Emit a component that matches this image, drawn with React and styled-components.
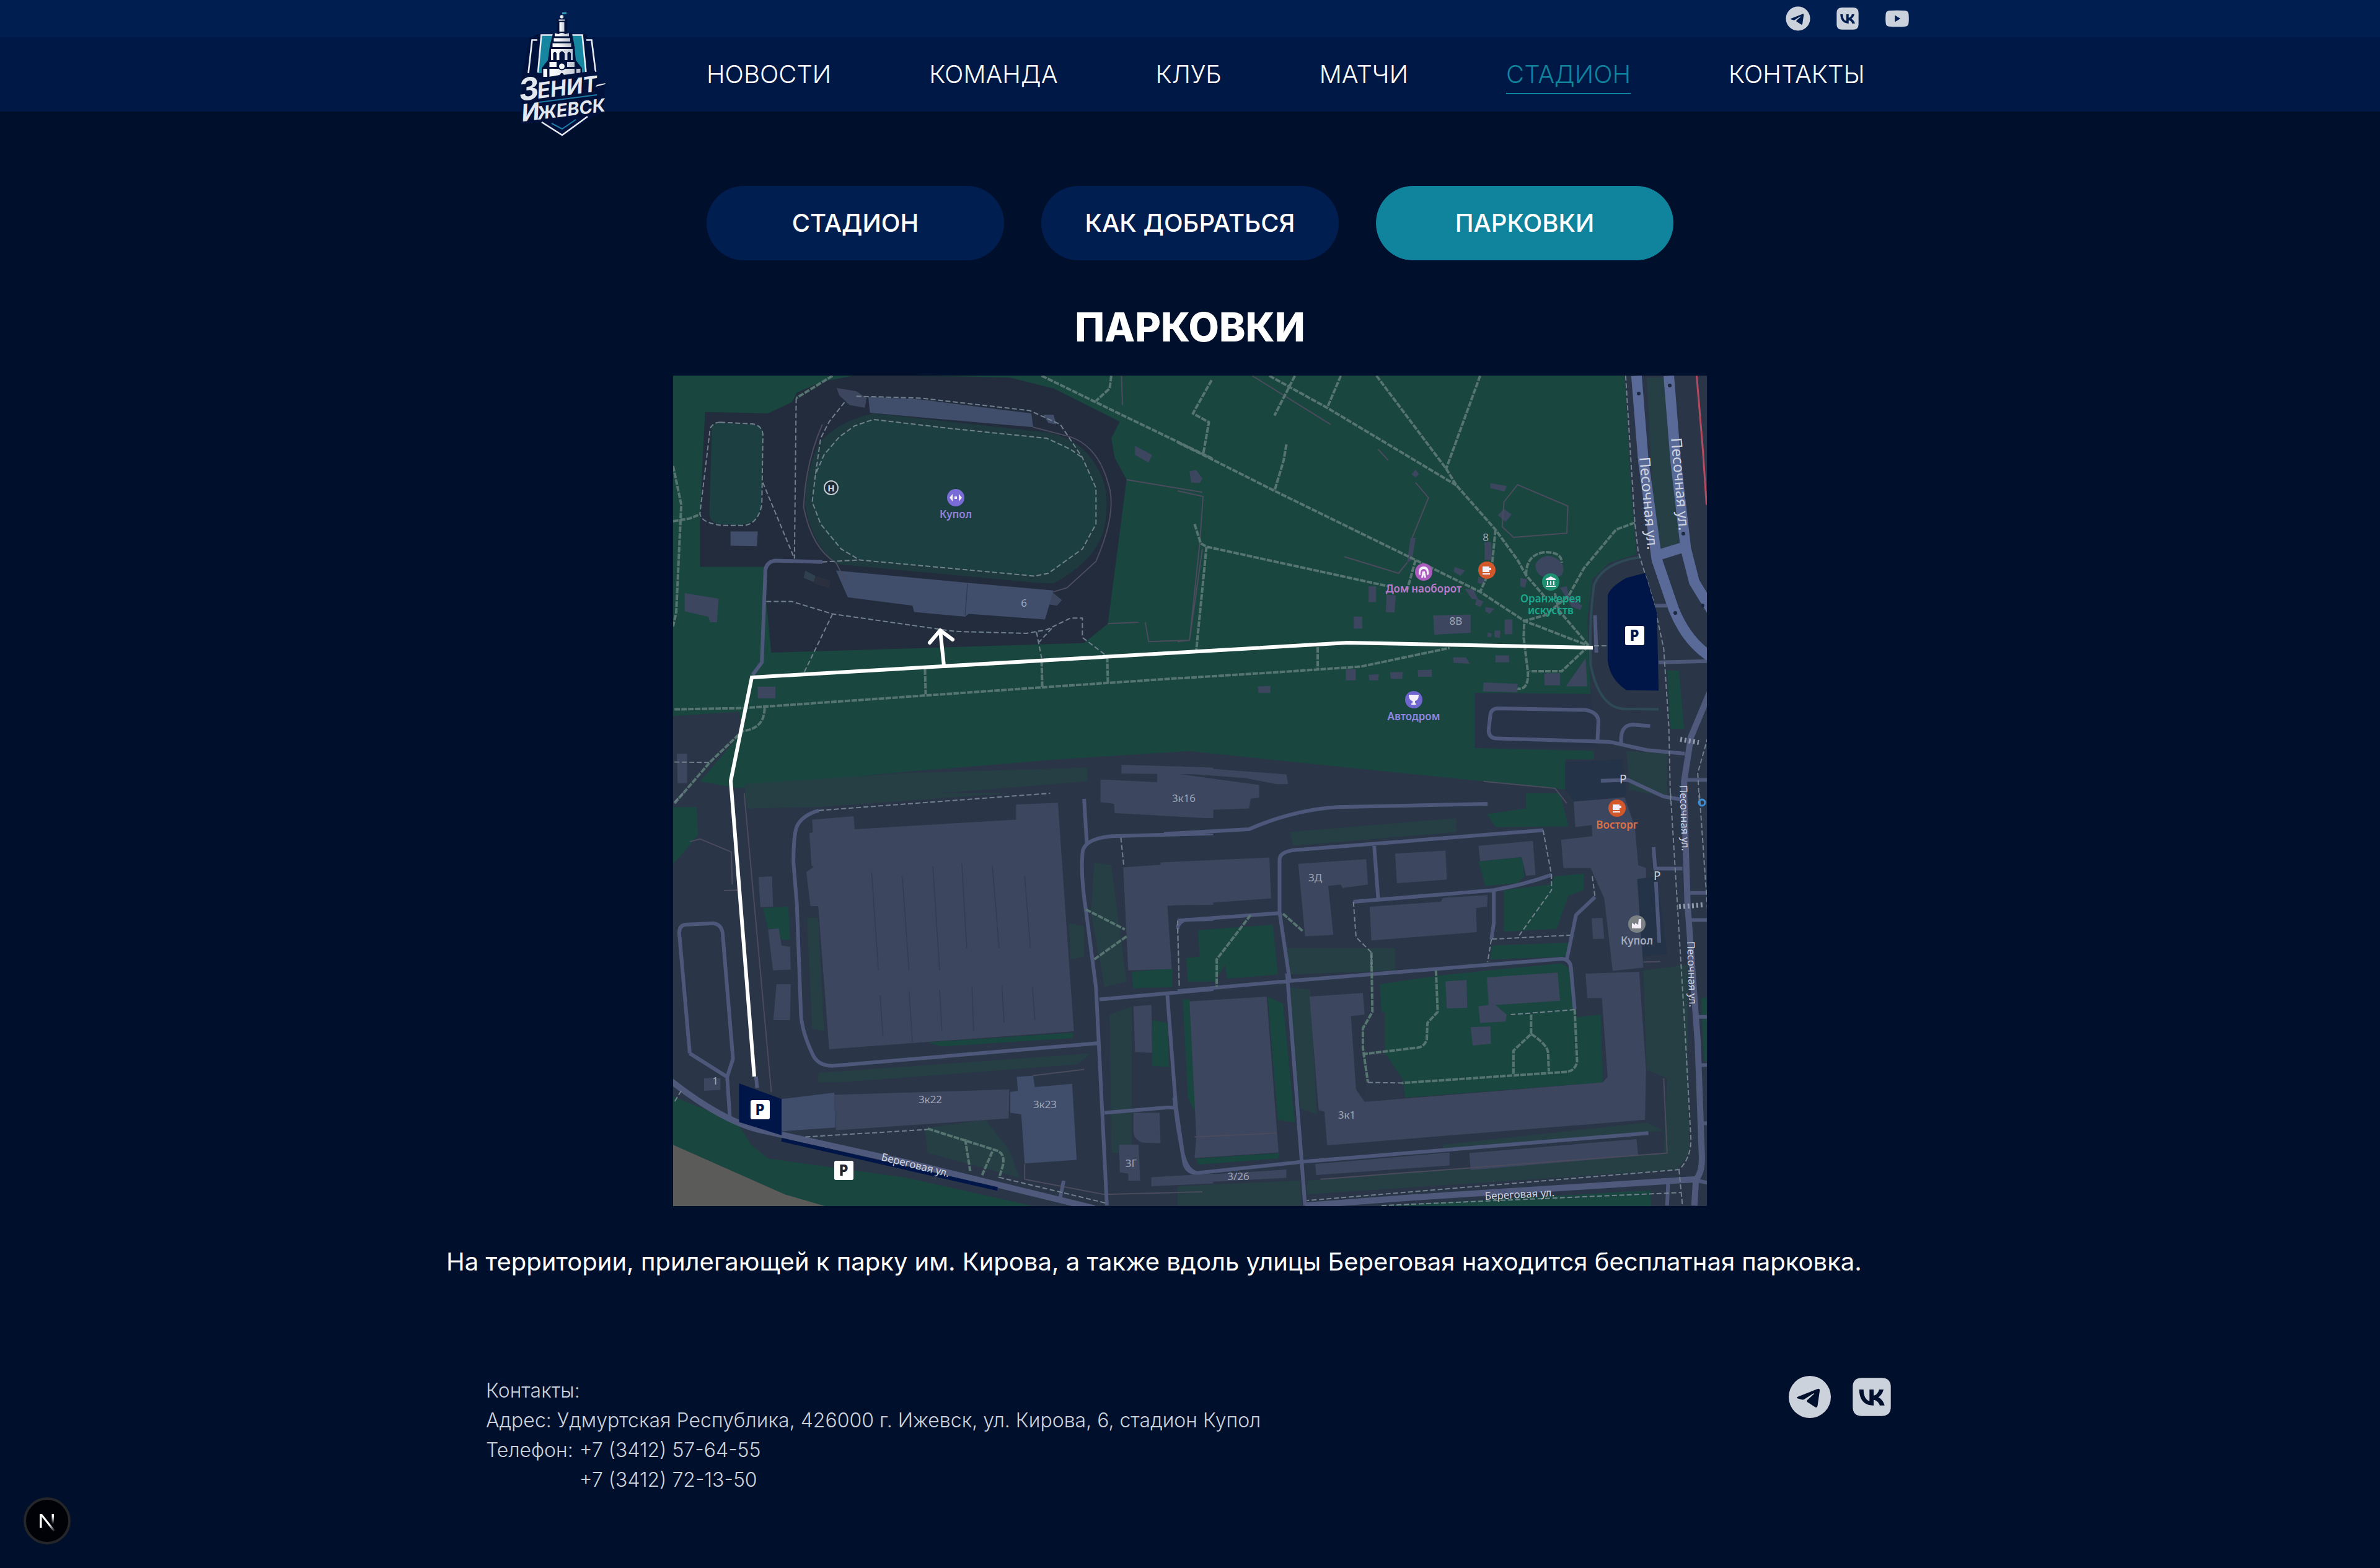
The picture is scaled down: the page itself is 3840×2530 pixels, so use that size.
import React from "react";
import styled, { createGlobalStyle } from "styled-components";

const color = {
  page: "#000f2b",
  topBar: "#001e50",
  navBar: "#001845",
  accent: "#10839d",
  text: "#ffffff",
  muted: "#ccd2dc",
};

const GlobalStyle = createGlobalStyle`
  * { box-sizing: border-box; }
  body {
    margin: 0;
    background: ${color.page};
    color: ${color.text};
    font-family: Inter, "Noto Sans", sans-serif;
  }
  a { color: inherit; text-decoration: none; }
  h1, p, address { margin: 0; font-style: normal; }
`;

const Page = styled.div`
  min-height: 100vh;
  display: flex;
  flex-direction: column;
`;

const Container = styled.div`
  width: 100%;
  max-width: 2400px;
  margin: 0 auto;
`;

const Header = styled.header`
  position: relative;
`;

const TopBar = styled.div`
  background: ${color.topBar};
`;

const TopBarInner = styled(Container)`
  height: 60px;
  padding-right: 36px;
  display: flex;
  justify-content: flex-end;
  align-items: center;
`;

const SocialList = styled.div`
  display: flex;
  align-items: center;
  gap: ${(p) => p.$gap}px;
`;

const SocialLink = styled.a`
  display: block;
  width: ${(p) => p.$size}px;
  height: ${(p) => p.$size}px;
  color: ${color.muted};
  svg { display: block; width: 100%; height: 100%; }
`;

const NavBar = styled.div`
  background: ${color.navBar};
`;

const NavInner = styled(Container)`
  position: relative;
  height: 120px;
  padding-left: 420px;
  display: flex;
  align-items: center;
`;

const LogoLink = styled.a`
  position: absolute;
  left: 110px;
  top: -50px;
  svg { display: block; width: 160px; height: 220px; }
`;

const Nav = styled.nav`
  display: flex;
  gap: 158px;
`;

const NavLink = styled.a`
  font-size: 40px;
  line-height: 60px;
  font-weight: 300;
  color: ${(p) => (p.$active ? color.accent : color.text)};
  border-top: 2px solid transparent;
  border-bottom: 2px solid ${(p) => (p.$active ? color.accent : "transparent")};
`;

const Main = styled(Container).attrs({ as: "main" })`
  padding: 120px 0 90px;
  display: flex;
  flex-direction: column;
  align-items: center;
`;

const Tabs = styled.div`
  display: flex;
  gap: 60px;
`;

const Tab = styled.button`
  width: 480px;
  height: 120px;
  border: 0;
  border-radius: 60px;
  background: ${(p) => (p.$active ? color.accent : "#001e50")};
  color: ${color.text};
  font: 500 40px/60px Inter, "Noto Sans", sans-serif;
  cursor: pointer;
`;

const Title = styled.h1`
  margin: 66px 0 36px;
  font-size: 64px;
  line-height: 84px;
  font-weight: 800;
`;

const MapSvg = styled.svg`
  display: block;
  width: 100%;
  max-width: 1668px;
  height: auto;
  font-family: "Noto Sans", sans-serif;
`;

const Description = styled.p`
  align-self: stretch;
  margin-top: 60px;
  font-size: 40px;
  line-height: 60px;
`;

const Footer = styled(Container).attrs({ as: "footer" })`
  padding: 64px 60px 118px 64px;
  display: flex;
  justify-content: space-between;
  align-items: flex-start;
`;

const Contacts = styled.address`
  font-size: 32px;
  line-height: 48px;
  font-weight: 300;
  color: ${color.muted};
`;

const Phones = styled.div`
  display: flex;
  gap: 10px;
`;

const PhoneList = styled.div`
  display: flex;
  flex-direction: column;
`;

const FooterSocials = styled.div`
  margin-top: -6px;
`;

const DevBadge = styled.button`
  position: fixed;
  left: 38px;
  bottom: 38px;
  width: 76px;
  height: 76px;
  padding: 0;
  border: 4px solid #24262a;
  border-radius: 50%;
  background: #000208;
  svg { display: block; width: 68px; height: 68px; }
`;

/* ---------- icons ---------- */

const TelegramIcon = () => (
  <svg viewBox="0 0 80 80" fill="currentColor" fillRule="evenodd" aria-hidden="true">
    <path d="M40 6A34 34 0 1 1 40 74A34 34 0 1 1 40 6ZM20 40L52 27.2Q56.5 25.5 56 30L52.5 54.5Q51.5 58.5 48 56L36.5 48.5Q34 47 36 45L46.5 35.5Q48 33.5 45.5 34.5L31.5 43.5Q29.5 45 26 44L20 42.2Q18 41 20 40Z" />
  </svg>
);

const VkIcon = () => (
  <svg viewBox="0 0 80 80" fill="currentColor" fillRule="evenodd" aria-hidden="true">
    <path d="M24 9.3H56Q70.7 9.3 70.7 24V56Q70.7 70.7 56 70.7H24Q9.3 70.7 9.3 56V24Q9.3 9.3 24 9.3ZM19.7 28H26.7C26.8 38 30 45 36.3 46.5V28H43V37.8C47 37.2 50.5 33.5 52 28H59C57.5 34 54 38.5 50.5 40.5C55 42.5 59 47.5 60.7 53.7H53C51.5 49 48 45.3 43 44.7V53.7H42.2C28 53.7 20 44.5 19.7 28Z" />
  </svg>
);

const YoutubeIcon = () => (
  <svg viewBox="0 0 80 80" fill="currentColor" fillRule="evenodd" aria-hidden="true">
    <path d="M17 18Q40 16 63 18Q71 18.5 72 27Q73.500 40 72 53Q71 61.500 63 62Q40 64 17 62Q9 61.500 8 53Q6.500 40 8 27Q9 18.500 17 18ZM33.500 30.500V49.500L49 40Z" />
  </svg>
);

const NextMark = () => (
  <svg viewBox="0 0 68 68" aria-hidden="true">
    <defs>
      <linearGradient id="stem" x1="0" y1="0" x2="0" y2="1">
        <stop offset="0.2" stopColor="#fff" />
        <stop offset="1" stopColor="#fff" stopOpacity="0" />
      </linearGradient>
      <linearGradient id="diag" x1="0" y1="0" x2="1" y2="1">
        <stop offset="0.6" stopColor="#fff" />
        <stop offset="1" stopColor="#fff" stopOpacity="0" />
      </linearGradient>
    </defs>
    <path d="M22 23H25.500V45H22Z" fill="#fff" />
    <path d="M22 23H26L47 49.500L44 51Z" fill="url(#diag)" />
    <path d="M41.500 23H45V39H41.500Z" fill="url(#stem)" />
  </svg>
);

const Logo = () => (
  <svg viewBox="0 0 160 220" role="img" aria-label="Зенит-Ижевск">
    <defs>
      <linearGradient id="stone" x1="0" y1="0" x2="1" y2="0">
        <stop offset="0.3" stopColor="#f7f8fb" />
        <stop offset="1" stopColor="#b9bfcc" />
      </linearGradient>
    </defs>
    <path d="M37 45H116L133 110L146 145L143 170L120 182L77 211L42 188L11 188L12 112L24 52Z" fill="#00123c" />
    <g fill="none" stroke="#e8ebf1" strokeWidth="2.600">
      <path d="M37 54.500H28.500L22.500 108" />
      <path d="M116 54.500H124.500L131 106" />
    </g>
    <path d="M44 47H109L115 108H38Z" fill="#1686a0" />
    <path d="M62 46.500H43.500L38 107" fill="none" stroke="#e8ebf1" strokeWidth="2.600" />
    <path d="M91 46.500H109.500L115.500 107" fill="none" stroke="#e8ebf1" strokeWidth="2.600" />
    <path d="M68 20H85V42L93 44L97 65L99 87L109 100V116H44V100L54 87L57 65L62 44L69 42Z" fill="#00123c" />
    <path d="M77 10H84V13H77Z" fill="#2a9cc0" />
    <g fill="url(#stone)">
      <circle cx="76.500" cy="17" r="2.800" />
      <path d="M71.500 21.500H81.500V23.500H71.500ZM72.500 25.500H80.500V41H72.500Z" />
      <path d="M65 43.500L71 45Q76.500 41 82 45L88 43.500V48.500H65Z" />
      <path d="M63.500 51.500H90V57H63.500ZM61.500 60H91.500V66H61.500Z" />
      <path d="M59 69H94V87H91V76Q88 71 85.500 76V87H81V76Q76.500 69 72.500 76V87H68V76Q65.500 71 62.500 76V87H59Z" />
      <path d="M56.500 90H68V98H56.500ZM85 90H97V98H85Z" />
      <path d="M46.500 101H53V114H46.500ZM56.500 101H97V111H80Q76.500 104 73 111L56.500 114ZM100 101H106.500V109H100Z" />
    </g>
    <circle cx="76.500" cy="97" r="6.500" fill="#00123c" />
    <circle cx="76.500" cy="97" r="4.500" fill="#f7f8fb" />
    <path d="M12 120L130 104L136 126L148 122L140 170L14 190Z" fill="#00123c" />
    <g fill="#e3e7ee" fontFamily="Inter, sans-serif" fontWeight="700" fontStyle="italic">
      <text transform="translate(9 153) rotate(-7)" fontSize="50">З</text>
      <text transform="translate(38 149) rotate(-7)" fontSize="35">ЕНИТ</text>
      <text transform="translate(13 186) rotate(-7)" fontSize="38">И</text>
      <text transform="translate(38 183) rotate(-7)" fontSize="29">ЖЕВСК</text>
    </g>
    <path d="M133 127L147 124L146 126L131 130Z" fill="#e3e7ee" />
    <path d="M40 155L133 143" stroke="#1d7ba5" strokeWidth="2" />
    <path d="M44 187L77 208L118 178" fill="none" stroke="#e8ebf1" strokeWidth="2.600" />
    <path d="M60 189L77 198L99 183" fill="none" stroke="#1d7ba5" strokeWidth="2" />
  </svg>
);

/* ---------- parking map ---------- */

// The plan is stored as four survey sheets, each with its own grid; `plot`
// converts a sheet's path data into map units.
const SHEETS = {
  nw: { x: -6, y: -6 },
  ne: { x: 814, y: -6 },
  sw: { x: -6, y: 674 },
  se: { x: 814, y: 674 },
};
const GRID_X = 860 / 1568;
const GRID_Y = 700 / 1568;

const plot = (sheet, d) =>
  d.replace(/(-?\d+) (-?\d+)/g, (_, x, y) =>
    `${(x * GRID_X + SHEETS[sheet].x).toFixed(1)} ${(y * GRID_Y + SHEETS[sheet].y).toFixed(1)}`
  );

const AREAS = [
  // park
  { fill: "#1a4640", nw: "M0 0L1600 0L1600 1365L1150 1400L700 1445L200 1505L90 1480L160 1380L215 1300L205 1228L0 1245Z", ne: "M-10 0L1315 0L1335 450L1350 660L1270 690L1220 750L1205 900L1215 1165L875 1160L875 1360L1225 1370L1225 1400L1140 1400L1140 1510L900 1480L500 1430L-10 1365Z" },
  // stadium grounds
  { fill: "#222c3c", nw: "M105 145L290 150L360 110L375 75L450 35L560 10L1000 20L1130 60L1325 180L1300 240L1310 310L1345 390L1290 910L1220 980L300 1015L285 830L280 705L90 705L90 520Z" },
  { fill: "#1f3a3e", nw: "M600 150L1120 220Q1220 250 1260 350Q1300 430 1280 560Q1260 680 1130 765L1080 762L490 695Q420 620 400 490Q395 380 440 260Q490 180 600 150Z" },
  { fill: "#1c4042", nw: "M600 172L1110 240Q1190 260 1230 350Q1275 430 1255 550Q1220 660 1115 728L1075 738L560 680Q450 620 420 470Q420 330 470 270Q530 190 600 172ZM125 200Q130 185 150 185L240 190Q278 195 275 230L270 490Q260 550 210 553L140 550Q115 540 118 500Z" },
  // muted lawns
  { fill: "#263f45", nw: "M220 1490L700 1450L1230 1430L1230 1480L230 1580Z", sw: "M220 0L1000 0L440 50L230 55ZM405 450L438 450L455 860L420 850ZM440 1010L1240 940L1200 980L500 1045L435 1045ZM1250 250L1300 260L1345 680L1280 700L1240 430ZM1175 470L1220 480L1220 590L1180 600ZM1295 800L1360 770L1360 1300L1300 1300ZM750 1210L930 1180L1000 1290L1030 1390L760 1300Z", se: "M330 140L820 90L820 140L340 190ZM310 560L640 560L640 640L330 655ZM330 700L390 710L410 1160L360 1140ZM780 1270L1380 1190L1430 1220L780 1290ZM1370 640L1500 620L1505 1300L1470 1360L380 1450L380 1400L1430 1300L1440 1030L1380 1000ZM0 1420L360 1400L365 1490L0 1490Z", ne: "M1380 20L1440 20L1460 330L1480 620L1420 640L1400 500ZM1320 1370L1440 1380L1440 1540L1330 1510Z" },
  // bright lawns
  { fill: "#1a4640", sw: "M0 50L80 50L85 150L30 230L0 270ZM275 415L350 410L355 530L330 530L320 490L290 490ZM0 1090L200 1190L240 1270L290 1320L700 1390L1100 1500L450 1495L340 1450L0 1265ZM1360 645L1480 632L1480 700L1365 705ZM1420 820L1465 830L1470 990L1420 985ZM760 900L1190 865L1185 885L800 915Z", se: "M910 75L1025 55L1025 0L1125 0L1150 120L935 122ZM885 245L1015 230L1020 300L1000 325L905 335ZM60 495L280 475L295 655L145 670L140 620L110 680L30 680L25 595L65 590ZM960 350L1095 330L1110 300L1195 290L1195 350L1150 370L1115 490L960 500ZM925 550L1150 540L1145 590L920 600ZM595 690L760 660L910 640L1130 615L1160 640L1170 810L1245 800L1250 1045L670 1100L660 1030L610 1020ZM15 745L35 745L55 1160L30 1100ZM265 735L310 760L345 1190L295 1180ZM55 1320L300 1300L295 1320L60 1342ZM1540 740L1568 735L1568 970L1548 970ZM470 1500L1390 1435L1395 1500Z", ne: "M1440 1080L1475 1080L1490 1290L1450 1290Z" },
  // yards
  { fill: "#283347", ne: "M875 1160L1215 1165L1240 1360L875 1360Z" },
  { fill: "#253349", ne: "M1140 1410L1310 1400L1320 1530L1170 1560L1140 1510Z", se: "M1350 310L1410 300L1440 580L1370 590Z" },
  { fill: "#2c3649", se: "M545 800L610 790L610 940L665 1040L665 1100L550 1115Z" },
  // river bank
  { fill: "#5b5c5a", sw: "M0 1265L340 1450L480 1500L0 1500Z" },
  // buildings
  {
    fill: "#3d465f",
    nw: "M45 800L145 820L140 905L120 905L115 885L45 865ZM1370 268L1420 300L1410 328L1370 300ZM1530 360L1550 355L1568 385L1560 402L1535 400ZM260 1138L312 1138L312 1180L260 1180ZM22 1380L52 1380L52 1487L24 1487ZM1330 1420L1600 1430L1600 1455L1330 1452ZM492 58L550 70L580 95L575 130L530 120L500 85ZM1120 790L1155 825L1140 845L1115 840Z",
    ne: "M35 360L50 355L72 388L65 402L42 400ZM0 1425L320 1455L325 1490L290 1490L200 1468L0 1450ZM920 402L968 412L962 433L920 420ZM960 495L983 515L965 542L942 518ZM688 370L700 353L710 370L700 382ZM685 600L700 600L690 680L675 690ZM903 615L922 615L925 680L903 680ZM562 775L584 775L584 832L562 832ZM615 805L642 808L638 870L612 868ZM518 885L543 885L543 928L518 928ZM752 880L862 877L862 943L755 950ZM815 705L845 718L832 738L812 722ZM885 740L905 750L898 768L882 762ZM845 785L870 785L885 825L865 820ZM880 820L900 830L890 850L875 840ZM905 850L932 855L918 875L905 865ZM962 895L985 895L985 948L962 948ZM932 935L950 935L948 962L932 958ZM912 942L925 945L922 958L912 958ZM810 1032L848 1032L860 1055L812 1052ZM935 1025L975 1025L975 1050L935 1050ZM495 1075L524 1075L524 1115L495 1115ZM562 1095L592 1093L590 1115L564 1115ZM625 1085L663 1085L660 1110L627 1110ZM706 1078L748 1076L748 1102L708 1102ZM236 1137L273 1135L273 1160L238 1160ZM900 1122L1000 1128L1000 1158L898 1155ZM1078 1090L1125 1090L1125 1133L1080 1133ZM1200 1035L1205 1137L1142 1137ZM1008 745L1028 750L1022 780L1008 775ZM1125 780L1145 775L1150 805L1190 845L1185 860L1160 850ZM1055 690Q1080 650 1115 675Q1145 700 1130 735Q1100 755 1065 735Q1048 710 1055 690Z",
    sw: "M1268 -50L1600 -30L1600 90L1310 72L1308 38L1268 32ZM420 95L542 83L545 130L1020 95L1020 40L1143 35L1155 250L1190 860L470 925L438 408L415 408L403 285L425 265L418 262L412 145L422 140ZM262 303L302 300L305 410L268 412ZM290 492L322 488L330 550L355 555L357 637L305 640ZM315 690L357 690L355 820L306 820ZM102 1030L150 1030L150 1072L102 1075ZM1335 268L1600 245L1600 403L1465 405L1478 635L1350 640ZM1365 770L1418 765L1420 938L1370 935ZM1365 1155L1442 1155L1445 1265L1390 1262Q1365 1250 1365 1220ZM1323 1270L1380 1270L1385 1400L1350 1400L1350 1375L1325 1370ZM1418 1388L1600 1375L1600 1410L1418 1420ZM485 1090L1000 1070L998 1175L490 1218Z",
    se: "M-60 -80L240 -30L240 15L215 20L210 55L90 60L88 90L-60 80ZM-50 250L270 232L275 380L-60 410ZM355 255L555 238L560 330L485 342L480 330L443 335L458 512L375 517ZM640 218L788 207L792 312L645 325ZM885 190L1045 172L1053 295L1025 298L1012 230L890 245ZM565 410L775 392L780 378L912 368L910 410L878 415L880 502L570 532ZM1165 30L1315 15L1345 120L1355 260L1378 270L1378 305L1352 310L1370 630L1280 642L1255 380L1215 270L1135 270L1128 168L1220 155L1218 115L1170 122ZM1218 452L1250 450L1255 525L1222 527ZM35 752L262 735L297 1298L50 1318L55 1240ZM388 735L545 722L550 800L510 805L525 1070L550 1115L1250 1045L1265 1025L1248 740L1205 740L1200 652L1358 645L1378 1000L1375 1180L440 1272L432 1150L415 1145ZM788 680L850 675L852 775L792 778ZM910 665L1118 648L1125 750L935 765L968 800L965 825L890 830L885 770L915 765ZM862 845L920 843L922 905L868 912ZM405 1340L800 1298L800 1345L408 1380ZM858 1300L1350 1250L1355 1310L862 1362ZM0 1385L320 1360L320 1390L0 1410Z",
  },
  { fill: "#404d6b", nw: "M585 90L740 100L1065 150L1070 200L590 148ZM490 718L875 762L1130 790L1105 895L880 875L870 885L720 868L715 845L525 815ZM180 577L260 577L258 630L180 628ZM1100 155L1130 155L1138 190L1115 185Z", sw: "M330 1105L485 1082L488 1208L330 1222ZM1022 1025L1070 1020L1075 1062L1185 1050L1198 1325L1045 1338L1035 1160L1003 1155L1003 1080L1025 1075Z" },
  { fill: "#30414e", nw: "M400 718L430 738L425 760L395 745Z" },
  { fill: "#2a303e", nw: "M430 738L475 755L470 782L425 765Z" },
];

const LINES = [
  { stroke: "#4a4b5c", width: 2, nw: "M450 190Q400 330 395 490Q420 640 490 690L520 760M1070 200L1180 235Q1260 270 1290 400Q1320 500 1255 685L1170 780L1130 795M1345 390L1568 435M1330 14L1333 120M1380 905L1290 910M1400 905L1410 975L1530 970L1568 640", ne: "M220 14L450 190M590 280L620 320M700 400L738 455L690 600M490 668L650 728L675 690M990 600L955 560L960 470L1000 408L1148 485L1145 583L990 598M0 430L75 450L65 620L35 970L0 975M900 1480L1110 1505L1145 1560", sw: "M220 0L300 1080M60 175L90 165L182 212L185 330M160 352L205 350M1045 1340L1045 1395L1280 1450L1568 1440M1070 1020L1220 998", se: "M1430 1030L1440 1300L420 1395M1370 610L1420 608M50 1242L290 1228" },
  { stroke: "#343c55", width: 1.5, sw: "M595 285L615 640M685 300L705 640M775 265L795 640M860 255L875 560M950 260L970 560M1045 300L1062 560M620 730L628 880M705 715L715 900M795 710L802 860M890 700L895 860M978 695L985 830M1068 700L1075 820", nw: "M877 765L870 880" },
  { stroke: "#2e4b55", width: 4, ne: "M1360 670Q1250 690 1225 770Q1210 900 1215 1060Q1240 1210 1310 1218L1415 1220" },
  { stroke: "#4d577a", width: 6, nw: "M450 687L310 682Q280 690 282 730L272 1050L245 1095", ne: "M920 1240Q922 1218 940 1216L1200 1222Q1235 1230 1238 1260L1235 1335M920 1240L915 1295Q915 1325 940 1325L1270 1337L1380 1367L1492 1380M1305 1345Q1300 1275 1340 1275L1390 1280M1245 1478L1325 1475L1430 1535L1480 1545M1405 845L1440 845M1415 1050L1568 1045M1490 1475L1568 1475M1228 880L1232 1015", sw: "M1265 903L480 985Q435 985 420 940Q390 860 387 800L375 400L365 250Q365 150 375 120Q390 80 440 62M60 940L30 520Q25 480 45 475L130 470Q155 475 157 510L187 960L170 1025L60 940M170 1025L178 1170M1220 20L1228 180M1600 145L1300 155Q1215 165 1215 220Q1210 300 1225 420L1255 700L1287 1490M1265 745L1600 708M1465 730L1490 1130L1510 1300Q1525 1375 1560 1372M1280 1155L1490 1133M1600 455L1520 457Q1495 465 1495 490M1160 1400L1150 1460M255 1024L258 1065", se: "M-40 147L210 130Q340 60 470 50L912 38M0 715L330 678L1130 598Q1155 600 1157 630L1168 780M330 678L300 430L300 240Q300 205 370 203L1075 133M0 460L300 433M322 650L375 1490M578 185L590 380M517 392L930 350Q1020 330 1100 295M930 350L930 470L923 528M1145 600L1172 440L1228 375M-10 1100L0 1200L20 1340Q30 1375 60 1372L368 1332L1385 1228M1400 195L1405 272L1485 272M1407 320L1417 540M1500 360L1568 360M1510 458L1568 458M1530 808L1568 808M1535 982L1568 982M1545 1193L1568 1193M1443 1410L1440 1490M1530 1400L1568 1410" },
  { stroke: "#4f597c", width: 10, sw: "M0 1035Q150 1180 260 1215L700 1335L1250 1500", se: "M375 1490L700 1460L1525 1395Q1545 1370 1542 1300L1530 900L1500 400L1490 0M1525 1395L1520 1490", ne: "M1568 1150L1510 1320L1490 1480L1490 1600" },
  { stroke: "#596a98", width: 17, ne: "M1350 14L1370 320L1410 680L1460 860Q1500 980 1575 1035M1445 14L1465 320L1495 640L1520 760L1575 870M1420 660L1485 635" },
  { stroke: "#567470", width: 4, dash: "9 2", nw: "M1095 14L1330 155L1600 315M1300 14L1295 60L1255 105M11 340L35 480L20 870L11 920M11 540L60 530L90 515M15 1220L220 1215L750 1170L1100 1140L1500 1107M752 1075L754 1165M1095 1045L1097 1140M1288 1030L1290 1125M280 1215Q280 1290 215 1298L120 1410L15 1560M480 14L373 95", ne: "M0 255L75 300L285 430L700 680L890 795L1020 900L1210 990M270 14L440 130L820 410M585 14L790 350L820 410L935 570L1000 680L1025 735L1085 820M890 14L790 350M100 30L45 150L92 182L75 300M480 14L440 130M345 14L285 158M320 262L312 320L285 430M50 550L68 620L85 632L620 775M85 632L55 1005M700 680L675 790M935 570L925 700L890 795M1025 735Q1025 660 1080 652Q1130 650 1130 690M1345 545L1290 570L1195 710L1150 810L1080 880L1020 900L1018 960L1030 1080Q1035 1150 1000 1145M1120 860L1210 990L1130 1082L1035 1082M0 1108L300 1085L540 1065L800 998M412 995L412 1075M1110 800L1125 880", sw: "M1225 420L1340 492M1345 517L1250 600M760 1212L960 1290Q990 1300 980 1350L970 1390M870 1250L885 1365M950 1295L920 1380", se: "M215 440L115 600L115 700M760 640L765 790L735 830L733 890Q725 920 700 920L550 942M1168 780L1175 970Q1170 1005 1140 1007L660 1047M1040 800L1040 870L988 930L988 1015M1040 870Q1090 910 1090 940L1092 1005M310 435L370 500M570 575L573 790L545 850L545 920L560 1045" },
  { stroke: "#71808d", width: 2, dash: "8 4", nw: "M373 95L368 675M550 88L740 95L1060 140L1150 190L1215 310L1255 420L1255 550L1215 640L1115 728L1075 738L560 680L505 640L445 550L420 470L430 370L455 300L500 235L545 195L600 172L830 205L1110 240L1180 280L1215 310M515 110L470 180L445 240L430 370M150 182L245 188Q278 195 275 240L272 480Q260 550 220 555L155 555Q90 545 90 510L120 205Q128 182 150 182M275 400L368 675M450 687L560 680M285 830L360 830L480 875L840 938L1050 945L1110 932L1180 890L1215 890L1215 960L1285 1025M480 875L395 1090M1080 940L1095 1035M1085 980L1130 920M15 1410L120 1412", ne: "M1318 14L1345 545L1355 650L1400 830L1430 1000L1445 1280L1450 1560M1225 990L1265 990M1560 1320L1530 1450L1535 1560", sw: "M440 62L1120 0M1328 160L1337 265M1495 490L1500 705M400 1242L760 1215M970 1388L1287 1482M35 1075L15 1115M0 50L40 0", se: "M1450 0L1470 400L1490 800L1510 1250Q1510 1320 1475 1360L380 1472M517 392L525 520L570 575L570 640M923 528L912 610M925 527L1155 513M1075 133L1100 295L1100 350L1000 522M1220 300L1228 375M1168 782L980 800M560 1045L660 1047M600 1490L1480 1443M1475 1360L1485 1490M0 460L5 700M1535 0L1560 440" },
];

const BUILDING_NUMBERS = [
  [566, 373, "6"], [1311, 267, "8"], [1263, 402, "8В"], [824, 688, "3к16"],
  [415, 1174, "3к22"], [600, 1182, "3к23"], [739, 1277, "ЗГ"], [912, 1298, "3/26"],
  [1087, 1199, "3к1"], [1036, 816, "ЗД"], [68, 1144, "1"],
];

const STREETS = [
  { x: 1559, y: 132, angle: 85, size: 24, name: "Песочная ул." },
  { x: 1610, y: 101, angle: 85, size: 24, name: "Песочная ул." },
  { x: 1624, y: 661, angle: 88, size: 17, name: "Песочная ул." },
  { x: 1636, y: 913, angle: 88, size: 17, name: "Песочная ул." },
  { x: 335, y: 1266, angle: 14, size: 17, name: "Береговая ул." },
  { x: 1310, y: 1330, angle: -3, size: 17, name: "Береговая ул." },
];

const CUP = "M-7 -6H4V3H-7ZM4 -4H7V0H4ZM-7 5H5V7H-7Z";
const PLACES = [
  { x: 456, y: 197, fill: "#7a6cd6", ink: "#9080dc", lines: ["Купол"], glyph: "M-10 0L-5 -6V6ZM10 0L5 -6V6ZM-2 -2H2V2H-2Z" },
  { x: 1211, y: 317, fill: "#a95cbd", ink: "#bd79cd", lines: ["Дом наоборот"], glyph: "M-8 4Q-9 -9 0 -9Q9 -9 8 4L5 5Q6 -5 0 -5Q-6 -5 -5 5ZM-2 -1H2L4 9H1L0 4L-1 9H-4Z" },
  { x: 1313, y: 314, fill: "#d2572b", ink: "#e07a50", lines: [], glyph: CUP },
  { x: 1416, y: 333, fill: "#1d8f73", ink: "#19a88b", lines: ["Оранжерея", "искусств"], glyph: "M-8 -5L0 -9L8 -5V-3H-8ZM-6 -2H-4V5H-6ZM-1 -2H1V5H-1ZM4 -2H6V5H4ZM-8 6H8V8H-8Z" },
  { x: 1195, y: 523, fill: "#6f66cf", ink: "#8f86e0", lines: ["Автодром"], glyph: "M-8 -8H8Q8 1 2 2V6H4V8H-4V6H-2V2Q-8 1 -8 -8Z" },
  { x: 1523, y: 698, fill: "#d2572b", ink: "#dd7046", lines: ["Восторг"], glyph: CUP },
  { x: 1555, y: 885, fill: "#7c8284", ink: "#a4abba", lines: ["Купол"], glyph: "M-8 7V-2L-3 1V-2L2 1L3 -8H7V7Z" },
];

const PARKING_SIGNS = [[1551, 419, "#001648"], [140, 1184, "#001648"], [275, 1282, "#22242a"]];

const ParkingMap = () => (
  <MapSvg viewBox="0 0 1668 1340" role="img" aria-label="Схема парковок у стадиона">
    <rect width="1668" height="1340" fill="#2a3547" />
    {AREAS.map(({ fill, ...parts }, i) => (
      <path key={i} fill={fill} d={Object.entries(parts).map(([s, d]) => plot(s, d)).join("")} />
    ))}
    {LINES.map(({ stroke, width, dash, ...parts }, i) => (
      <path key={i} fill="none" stroke={stroke} strokeWidth={width} strokeDasharray={dash}
        strokeLinejoin="round" d={Object.entries(parts).map(([s, d]) => plot(s, d)).join("")} />
    ))}
    <path d={plot("ne", "M1527 14L1545 280L1556 480")} fill="none" stroke="#b5495f" strokeWidth="3" />
    <g fill="#1c2740">
      <circle cx="1558" cy="29" r="3" /><circle cx="1608" cy="16" r="3" />
      <circle cx="1630" cy="255" r="3" /><circle cx="1617" cy="383" r="3" /><circle cx="1661" cy="371" r="3" />
    </g>
    <path d="M1625 587L1655 592M1623 857L1662 854" stroke="#8f99aa" strokeWidth="8" strokeDasharray="3 4" />
    <circle cx="1660" cy="689" r="5" fill="none" stroke="#3f8fd8" strokeWidth="3" />

    <path fill="#001648" d={plot("ne", "M1375 727L1320 745Q1270 780 1265 810L1265 1040Q1270 1110 1320 1150L1415 1152L1410 870Z") + plot("sw", "M205 1048L330 1105L330 1236L205 1188Z")} />
    <path d={plot("sw", "M330 1252L965 1430")} stroke="#001648" strokeWidth="6" />

    <g fill="none" stroke="#ffffff" strokeWidth="6">
      <path d="M131 1131L93 654L127 487L1088 431L1484 439" />
      <path d="M437 468L431 411" />
      <path d="M414 431L431 411L451 426" strokeLinecap="round" strokeLinejoin="round" />
    </g>

    <g fill="#9da5b6" fontSize="17" textAnchor="middle">
      {BUILDING_NUMBERS.map(([x, y, label]) => (
        <text key={label} x={x} y={y}>{label}</text>
      ))}
    </g>
    <g fill="#cdd3df">
      {STREETS.map((s, i) => (
        <text key={i} fontSize={s.size} transform={`translate(${s.x} ${s.y}) rotate(${s.angle})`}>{s.name}</text>
      ))}
      <text x="1527" y="658" fontSize="19">P</text>
      <text x="1582" y="814" fontSize="19">P</text>
    </g>
    {PLACES.map((p) => (
      <g key={`${p.x}-${p.y}`} transform={`translate(${p.x} ${p.y})`}>
        <circle r="14" fill={p.fill} />
        <path d={p.glyph} fill="#f3eef8" />
        {p.lines.map((line, i) => (
          <text key={line} y={33 + i * 19} fill={p.ink} fontSize="17" fontWeight="600" textAnchor="middle">{line}</text>
        ))}
      </g>
    ))}
    <circle cx="255" cy="181" r="11" fill="#1d2a33" stroke="#c3cad2" strokeWidth="2" />
    <text x="255" y="187" fill="#d5dae0" fontSize="15" fontWeight="700" textAnchor="middle">H</text>
    {PARKING_SIGNS.map(([x, y, ink]) => (
      <g key={x} transform={`translate(${x} ${y})`}>
        <rect x="-15" y="-15" width="31" height="31" rx="3" fill="#ffffff" />
        <text y="9" fill={ink} fontSize="24" fontWeight="800" textAnchor="middle">P</text>
      </g>
    ))}
  </MapSvg>
);

/* ---------- page ---------- */

const NAV_ITEMS = ["НОВОСТИ", "КОМАНДА", "КЛУБ", "МАТЧИ", "СТАДИОН", "КОНТАКТЫ"];
const TAB_ITEMS = ["СТАДИОН", "КАК ДОБРАТЬСЯ", "ПАРКОВКИ"];
const SOCIALS = [
  { name: "Telegram", Icon: TelegramIcon },
  { name: "ВКонтакте", Icon: VkIcon },
  { name: "YouTube", Icon: YoutubeIcon },
];

const Socials = ({ items, size, gap }) => (
  <SocialList $gap={gap}>
    {items.map(({ name, Icon }) => (
      <SocialLink key={name} href="#" aria-label={name} $size={size}><Icon /></SocialLink>
    ))}
  </SocialList>
);

export default function App() {
  return (
    <Page>
      <GlobalStyle />
      <Header>
        <TopBar>
          <TopBarInner><Socials items={SOCIALS} size={46} gap={34} /></TopBarInner>
        </TopBar>
        <NavBar>
          <NavInner>
            <LogoLink href="#" aria-label="На главную"><Logo /></LogoLink>
            <Nav>
              {NAV_ITEMS.map((item) => (
                <NavLink key={item} href="#" $active={item === "СТАДИОН"}>{item}</NavLink>
              ))}
            </Nav>
          </NavInner>
        </NavBar>
      </Header>
      <Main>
        <Tabs>
          {TAB_ITEMS.map((item) => (
            <Tab key={item} type="button" $active={item === "ПАРКОВКИ"}>{item}</Tab>
          ))}
        </Tabs>
        <Title>ПАРКОВКИ</Title>
        <ParkingMap />
        <Description>
          На территории, прилегающей к парку им. Кирова, а также вдоль улицы Береговая находится бесплатная парковка.
        </Description>
      </Main>
      <Footer>
        <Contacts>
          <div>Контакты:</div>
          <div>Адрес: Удмуртская Республика, 426000 г. Ижевск, ул. Кирова, 6, стадион Купол</div>
          <Phones>
            <span>Телефон:</span>
            <PhoneList>
              <a href="tel:+73412576455">+7 (3412) 57-64-55</a>
              <a href="tel:+73412721350">+7 (3412) 72-13-50</a>
            </PhoneList>
          </Phones>
        </Contacts>
        <FooterSocials><Socials items={SOCIALS.slice(0, 2)} size={80} gap={20} /></FooterSocials>
      </Footer>
      <DevBadge type="button" aria-label="Next.js"><NextMark /></DevBadge>
    </Page>
  );
}
